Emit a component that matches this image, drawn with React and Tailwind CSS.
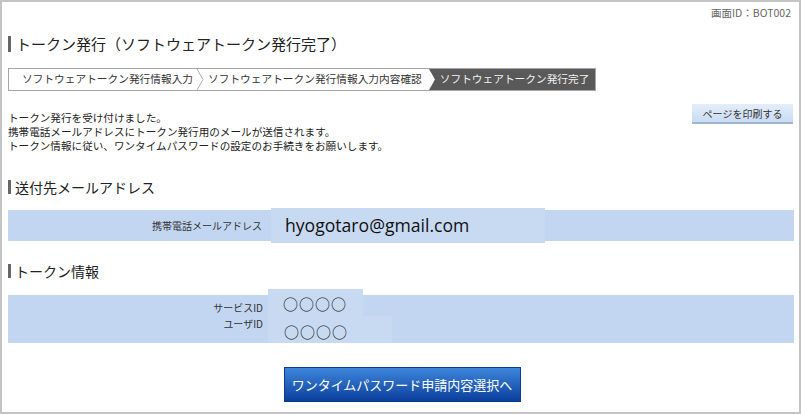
export default function App() {
  return (
    <div className="w-[801px] h-[414px] overflow-hidden border-2 border-[#c4c4c4] bg-white font-['Noto_Sans_CJK_JP',sans-serif] text-[#222]">
      <div className="flex justify-end pr-[8px] pt-[4px] text-[10.5px] leading-[14px] text-[#666]">画面ID：BOT002</div>

      {/* title */}
      <div className="mt-[14px] flex items-center pl-[6px]">
        <span className="h-[16px] w-[3px] bg-[#666]" />
        <h1 className="ml-[5px] text-[15px] leading-[20px] text-[#222]">トークン発行（ソフトウェアトークン発行完了）</h1>
      </div>

      {/* steps */}
      <div className="ml-[6px] mt-[14px] flex h-[23px] w-fit border border-[#a6a6a6] text-[10.7px] text-[#333]">
        <div className="flex items-center pl-[13px] pr-[3px]">ソフトウェアトークン発行情報入力</div>
        <svg width="9" height="21" viewBox="0 0 9 21" className="shrink-0">
          <polyline points="1,0 7,10.5 1,21" fill="none" stroke="#b0b0b0" strokeWidth="1" />
        </svg>
        <div className="flex items-center pl-[3px] pr-[5px]">ソフトウェアトークン発行情報入力内容確認</div>
        <div className="flex items-center bg-[#595959] text-[#f2f2f2]">
          <svg width="9" height="21" viewBox="0 0 9 21" className="shrink-0">
            <polygon points="0,0 2,0 8,10.5 2,21 0,21" fill="#fff" />
          </svg>
          <span className="pl-[4px] pr-[6px]">ソフトウェアトークン発行完了</span>
        </div>
      </div>

      {/* message + print */}
      <div className="mt-[13px] flex items-start justify-between pl-[6px] pr-[6px]">
        <div className="pt-[7px] text-[10.6px] leading-[14px] text-[#222]">
          <p>トークン発行を受け付けました。</p>
          <p>携帯電話メールアドレスにトークン発行用のメールが送信されます。</p>
          <p>トークン情報に従い、ワンタイムパスワードの設定のお手続きをお願いします。</p>
        </div>
        <button
          type="button"
          className="flex h-[20px] w-[101px] items-center justify-center border-b-2 border-[#9fb6d3] bg-gradient-to-b from-[#e4eefa] to-[#c9dcf3] text-[10px] text-[#333]"
        >
          ページを印刷する
        </button>
      </div>

      {/* mail section */}
      <div className="mt-[25px] flex items-center pl-[6px]">
        <span className="h-[14px] w-[3px] bg-[#666]" />
        <h2 className="ml-[4px] text-[14px] leading-[18px] text-[#222]">送付先メールアドレス</h2>
      </div>
      <div className="ml-[6px] mr-[5px] mt-[14px] flex h-[31px] items-center bg-[#c2d6f2]">
        <div className="w-[254px] text-right text-[10px] text-[#333]">携帯電話メールアドレス</div>
        <div className="-my-[2px] ml-[9px] flex h-[35px] w-[274px] items-center bg-[#c8daf1] pl-[14px] font-['Open_Sans',sans-serif] text-[17.6px] text-[#111]">
          hyogotaro@gmail.com
        </div>
      </div>

      {/* token section */}
      <div className="mt-[21px] flex items-center pl-[6px]">
        <span className="h-[14px] w-[3px] bg-[#666]" />
        <h2 className="ml-[4px] text-[14px] leading-[18px] text-[#222]">トークン情報</h2>
      </div>
      <div className="ml-[6px] mr-[5px] mt-[15px] flex h-[48px] bg-[#c2d6f2]">
        <div className="w-[255px] pt-[5px] text-right text-[10px] leading-[16px] text-[#333]">
          <p>サービスID</p>
          <p>ユーザID</p>
        </div>
        <div className="ml-[5px] flex flex-col">
          <div className="-mt-[6px] flex h-[27px] w-[95px] items-center bg-[#c8daf1] pl-[15px] pt-[3px] text-[15px] tracking-[1px] text-[#111]">○○○○</div>
          <div className="flex h-[27px] w-[124px] items-center bg-[#c8daf1] pl-[16px] pt-[6px] text-[15px] tracking-[1px] text-[#111]">○○○○</div>
        </div>
      </div>

      {/* next button */}
      <div className="mt-[24px] flex justify-center">
        <button
          type="button"
          className="ml-[3px] flex h-[35px] w-[237px] items-center justify-center border border-[#0c3a86] bg-gradient-to-b from-[#3f86dc] to-[#0b3f9c] text-[13px] text-white"
        >
          ワンタイムパスワード申請内容選択へ
        </button>
      </div>
    </div>
  );
}
